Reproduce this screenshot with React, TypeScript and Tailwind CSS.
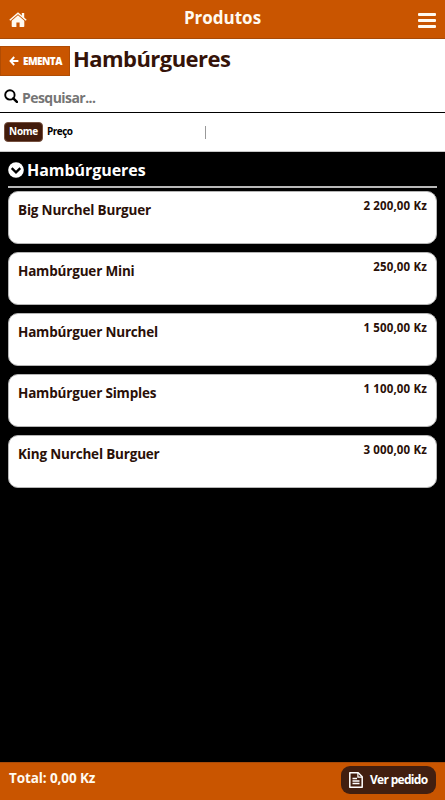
interface Product {
  id: number;
  name: string;
  price: string;
}

const products: Product[] = [
  { id: 1, name: 'Big Nurchel Burguer', price: '2 200,00 Kz' },
  { id: 2, name: 'Hambúrguer Mini', price: '250,00 Kz' },
  { id: 3, name: 'Hambúrguer Nurchel', price: '1 500,00 Kz' },
  { id: 4, name: 'Hambúrguer Simples', price: '1 100,00 Kz' },
  { id: 5, name: 'King Nurchel Burguer', price: '3 000,00 Kz' },
];

function HomeIcon() {
  return (
    <svg viewBox="0 0 18 16" className="h-[16px] w-[18px]" fill="currentColor">
      <path d="M9 3.3 15.3 8.7V14.2Q15.3 15 14.5 15H10.6V10.4H7.4V15H3.5Q2.7 15 2.7 14.2V8.7Z" />
      <path d="M.8 8.3 9 1.2 17.2 8.3M14 1.4V5" fill="none" stroke="currentColor" strokeWidth="1.5" />
      <path d="M12.8 1H15.2V6.4L12.8 4.3Z" />
    </svg>
  );
}

function ArrowIcon() {
  return (
    <svg viewBox="0 0 10 10" className="size-[10px] shrink-0" fill="none" stroke="currentColor" strokeWidth="1.9">
      <path d="M5.2 1 1.5 5 5.2 9M1.8 5H9.4" />
    </svg>
  );
}

function SearchIcon() {
  return (
    <svg viewBox="0 0 14 14" className="mt-[13px] size-[14px] text-black" fill="none" stroke="currentColor">
      <circle cx="5.9" cy="5.9" r="4.7" strokeWidth="1.9" />
      <path d="m9.3 9.3 3.6 3.6" strokeWidth="2.5" strokeLinecap="round" />
    </svg>
  );
}

function ChevronIcon() {
  return (
    <svg viewBox="0 0 16 16" className="mt-[10px] size-[16px]">
      <circle cx="8" cy="8" r="7.8" fill="white" />
      <path d="M3.7 6.1 8 10.3 12.3 6.1" fill="none" stroke="black" strokeWidth="2.3" />
    </svg>
  );
}

function FileIcon() {
  return (
    <svg viewBox="0 0 14 16" className="h-[16px] w-[14px]" fill="none" stroke="currentColor">
      <path d="M.8.8H9.2L13.2 4.8V15.2H.8Z" strokeWidth="1.5" strokeLinejoin="round" />
      <path d="M8.9 1V5.1H13" strokeWidth="1.2" />
      <path d="M3.5 6.5H8M3.5 9H10.5M3.5 11.5H10.5" strokeWidth="1.3" />
    </svg>
  );
}

function Header() {
  return (
    <header className="flex h-[39px] items-start justify-between border-b border-[#a84a08] bg-[#c95500] pr-[9px] pl-[9px] text-[#fffaf0]">
      <button type="button" className="mt-[12px] w-[18px]" aria-label="Início">
        <HomeIcon />
      </button>
      <h1 className="mt-[6px] text-[17px] leading-6 font-bold">Produtos</h1>
      <button type="button" className="mt-[13px] flex w-[18px] flex-col gap-[3px]" aria-label="Menu">
        <span className="h-[3px] w-full rounded-[1px] bg-[#fffaf0]" />
        <span className="h-[3px] w-full rounded-[1px] bg-[#fffaf0]" />
        <span className="h-[3px] w-full rounded-[1px] bg-[#fffaf0]" />
      </button>
    </header>
  );
}

function ProductCard({ product }: { product: Product }) {
  return (
    <li className="flex h-[53px] items-start justify-between rounded-[10px] border border-[#b5b5b5] bg-white pr-[9px] pl-[9px] text-[#2a1008]">
      <span className="mt-[8px] text-[13.5px] leading-5 font-bold tracking-[-0.18px]">{product.name}</span>
      <span className="mt-[5px] text-[11.5px] leading-[18px] font-bold tracking-[0.15px]">{product.price}</span>
    </li>
  );
}

export default function App() {
  return (
    <div className="flex h-[800px] w-[445px] flex-col overflow-hidden bg-white font-['Open_Sans','Noto_Sans',sans-serif]">
      <Header />

      <div className="mt-[7px] flex h-[30px] items-start">
        <button type="button" className="flex h-[30px] w-[70px] items-center gap-[4px] border border-[#b04c04] bg-[#c95500] pl-[8px] text-[10px] font-extrabold text-white">
          <ArrowIcon />
          <span className="-mt-px leading-4 tracking-[-0.55px]">EMENTA</span>
        </button>
        <h2 className="-mt-[4px] ml-[3px] text-[22px] leading-[32px] font-bold tracking-[-0.55px] text-[#351309]">Hambúrgueres</h2>
      </div>

      <div className="flex h-[37px] items-start border-b border-black pl-[4px]">
        <SearchIcon />
        <span className="mt-[12px] ml-[4px] text-[14px] leading-5 font-bold tracking-[-0.55px] text-[#757575]">Pesquisar...</span>
      </div>

      <div className="flex h-[39px] items-center border-b border-[#c8c8c8] pl-[4px] text-[10px] font-bold">
        <button type="button" className="h-[20px] w-[39px] rounded-[4px] border border-[#75503f] bg-[#421b0b] pb-px tracking-[-0.3px] text-white">Nome</button>
        <button type="button" className="ml-[4px] w-[26px] pb-px text-left tracking-[-0.5px] text-black">Preço</button>
        <span className="ml-[132px] h-[13px] w-px bg-[#999]" />
      </div>

      <main className="flex-1 bg-black pr-[8px] pl-[8px]">
        <div className="flex h-[36px] items-start border-b-2 border-[#b8b8b8] text-white">
          <ChevronIcon />
          <h3 className="mt-[6px] ml-[3px] text-[16px] leading-6 font-bold tracking-[-0.05px]">Hambúrgueres</h3>
        </div>
        <ul className="mt-[3px] space-y-2">
          {products.map(product => (
            <ProductCard key={product.id} product={product} />
          ))}
        </ul>
      </main>

      <footer className="flex h-[38px] items-start justify-between border-t border-[#a84a08] bg-[#c95500] pr-[9px] pl-[9px] text-[#fffaf0]">
        <span className="mt-[5px] text-[13.5px] leading-5 font-bold tracking-[-0.1px]">Total: 0,00 Kz</span>
        <button type="button" className="mt-[3px] flex h-[28px] w-[95px] items-center rounded-[9px] bg-[#421f10] pl-[8px] text-white">
          <FileIcon />
          <span className="-mt-px ml-[7px] text-[12px] leading-4 font-bold tracking-[-0.7px] whitespace-nowrap">Ver pedido</span>
        </button>
      </footer>
    </div>
  );
}
